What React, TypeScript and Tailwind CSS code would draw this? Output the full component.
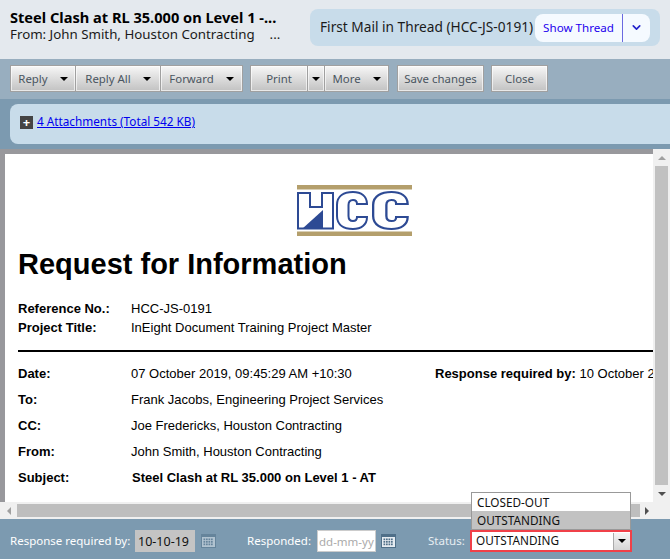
import { ChevronDown } from 'lucide-react';

const toolbarBtn = 'h-[27px] flex items-center justify-center text-[11.4px] text-[#4a5560] bg-gradient-to-b from-[#f7f7f7] to-[#c2c2c2] border border-[#a0a0a0] shadow-[inset_0_0_0_1px_#ffffffa0]';

function Caret() {
  return <span className="w-0 h-0 border-x-[4px] border-x-transparent border-t-[4px] border-t-black" />;
}

function CalendarIcon({ dim }: { dim?: boolean }) {
  return (
    <svg width="15" height="14" viewBox="0 0 15 14" className={dim ? 'opacity-50' : ''}>
      <rect x="0.5" y="0.5" width="14" height="13" fill="#e6ecf1" stroke="#4f6f88" />
      <rect x="1" y="1" width="13" height="2" fill="#4f6f88" />
      {[4.5, 7, 9.5].map((y) =>
        [2.5, 5, 7.5, 10].map((x) => <rect key={`${x}-${y}`} x={x} y={y} width="1.7" height="1.7" fill="#4f6f88" />)
      )}
    </svg>
  );
}

const letterC = 'M31 19 H21 C21 16 20 15 17 15 C14 15 12.5 17 12.5 20 V31 C12.5 34 14 36 17 36 C20 36 21 35 21 32 H31 C31 40 25 44 17 44 C8 44 1 40 1 31 V20 C1 11 8 7 17 7 C25 7 31 11 31 19 Z';

function Logo() {
  return (
    <svg width="115" height="51" viewBox="0 0 115 51">
      <rect x="0" y="0" width="115" height="4.5" fill="#b49f6c" />
      <rect x="0" y="46.5" width="115" height="4.5" fill="#b49f6c" />
      <path d="M1 8 H13 V22 H25 V8 H36 V43.5 H1 Z" fill="#fff" stroke="#2d4a94" strokeWidth="2" />
      <path d="M5 44 L26 25 V44 Z" fill="#2d4a94" />
      <path d={letterC} fill="#fff" stroke="#2d4a94" strokeWidth="2" transform="translate(39 0)" />
      <path d={letterC} fill="#fff" stroke="#2d4a94" strokeWidth="2" transform="translate(75 0) scale(1.15 1)" />
    </svg>
  );
}

const refRows = [
  ['Reference No.:', 'HCC-JS-0191'],
  ['Project Title:', 'InEight Document Training Project Master'],
];

const mailRows = [
  ['To:', 'Frank Jacobs, Engineering Project Services'],
  ['CC:', 'Joe Fredericks, Houston Contracting'],
  ['From:', 'John Smith, Houston Contracting'],
];

export default function App() {
  return (
    <div className="w-[670px] h-[559px] overflow-hidden flex flex-col bg-[#7c9ab0] font-['Noto_Sans',sans-serif] text-[13px] text-[#1a1a1a]">
      {/* Header */}
      <div className="h-[59px] shrink-0 bg-[#e4e9ee] flex items-start justify-between pl-[10px] pr-[10px]">
        <div className="pt-[9px] leading-[17px]">
          <div className="font-bold text-[14.6px] text-black whitespace-nowrap">Steel Clash at RL 35.000 on Level 1 -...</div>
          <div className="text-[13.3px] whitespace-nowrap">From: John Smith, Houston Contracting<span className="ml-[15px]">...</span></div>
        </div>
        <div className="mt-[9px] h-[37px] w-[350px] rounded-lg bg-[#c8dcea] flex items-center pl-[10px] text-[13.7px] whitespace-nowrap">
          <span>First Mail in Thread (HCC-JS-0191)</span>
          <div className="ml-auto mr-[10px] h-[28px] w-[115px] shrink-0 rounded-lg bg-[#f5faff] flex items-center text-[#2200ee] text-[11.6px]">
            <span className="flex-1 text-center">Show Thread</span>
            <span className="w-[28px] h-full border-l border-[#6a6ae0] flex items-center justify-center">
              <ChevronDown size={13} strokeWidth={3} className="text-[#2222cc]" />
            </span>
          </div>
        </div>
      </div>

      {/* Toolbar */}
      <div className="h-[40px] shrink-0 bg-[#98aebf] flex items-center pl-[10px] pb-[1px]">
        <div className="flex">
          <button className={`${toolbarBtn} w-[66px] gap-[12px]`}>Reply <Caret /></button>
          <button className={`${toolbarBtn} w-[85px] gap-[12px] border-l-0`}>Reply All <Caret /></button>
          <button className={`${toolbarBtn} w-[82px] gap-[12px] border-l-0`}>Forward <Caret /></button>
        </div>
        <div className="flex ml-[7px]">
          <button className={`${toolbarBtn} w-[58px]`}>Print</button>
          <button className={`${toolbarBtn} w-[17px] border-l-0`}><Caret /></button>
          <button className={`${toolbarBtn} w-[64px] gap-[12px] border-l-0`}>More <Caret /></button>
        </div>
        <button className={`${toolbarBtn} w-[87px] ml-[8px]`}>Save changes</button>
        <button className={`${toolbarBtn} w-[57px] ml-[7px]`}>Close</button>
      </div>

      {/* Attachments */}
      <div className="shrink-0 pt-[5px] pb-[5px] pl-[10px]">
        <div className="h-[40px] rounded-l-lg bg-[#c8dcea] flex items-center pl-[10px] pb-[4px] gap-[4px] text-[11.75px]">
          <span className="w-[13px] h-[13px] bg-[#444] text-white flex items-center justify-center text-[13px] font-bold leading-none">+</span>
          <a className="text-[#0000ee] underline">4 Attachments (Total 542 KB)</a>
        </div>
      </div>

      {/* Mail body */}
      <div className="flex-1 min-h-0 flex flex-col">
        <div className="flex-1 min-h-0 flex">
          <div className="flex-1 min-w-0 bg-[#98989c] pl-[5px] pt-[5px]">
            <div className="h-full overflow-hidden bg-white pl-[13px] pt-[31px] font-['Liberation_Sans',sans-serif] text-[13px] leading-[15px] text-black whitespace-nowrap">
              <div className="flex ml-[279px]"><Logo /></div>
              <h1 className="font-bold text-[29px] leading-[34px] mt-[11px]">Request for Information</h1>
              <div className="mt-[18px] leading-[19px]">
                {refRows.map(([k, v]) => (
                  <div key={k} className="flex">
                    <span className="w-[113px] shrink-0 font-bold">{k}</span><span>{v}</span>
                  </div>
                ))}
              </div>
              <div className="h-[2px] bg-black mt-[13px]" />
              <div className="flex mt-[14px] h-[26px]">
                <span className="w-[113px] shrink-0 font-bold">Date:</span>
                <span className="w-[304px] shrink-0">07 October 2019, 09:45:29 AM +10:30</span>
                <span><b>Response required by:</b> 10 October 2019</span>
              </div>
              {mailRows.map(([k, v]) => (
                <div key={k} className="flex h-[26px]">
                  <span className="w-[113px] shrink-0 font-bold">{k}</span><span>{v}</span>
                </div>
              ))}
              <div className="flex h-[26px] font-bold">
                <span className="w-[113px] shrink-0">Subject:</span><span className="ml-[1px]">Steel Clash at RL 35.000 on Level 1 - AT</span>
              </div>
            </div>
          </div>
          {/* Vertical scrollbar */}
          <div className="w-[17px] shrink-0 bg-[#f0f0f0] flex flex-col items-center">
            <div className="h-[17px] flex items-center justify-center"><span className="w-0 h-0 border-x-[4px] border-x-transparent border-b-[4px] border-b-[#a0a0a0]" /></div>
            <div className="flex-1 w-[13px] bg-[#c1c1c1]" />
            <div className="h-[17px] flex items-center justify-center"><span className="w-0 h-0 border-x-[4px] border-x-transparent border-t-[4px] border-t-[#505050]" /></div>
          </div>
        </div>
        {/* Horizontal scrollbar */}
        <div className="h-[17px] shrink-0 bg-[#f0f0f0] flex items-center">
          <div className="w-[17px] flex items-center justify-center"><span className="w-0 h-0 border-y-[4px] border-y-transparent border-r-[4px] border-r-[#a0a0a0]" /></div>
          <div className="flex-1 h-[13px] bg-[#bebebe]" />
          <div className="w-[13px] flex items-center justify-center"><span className="w-0 h-0 border-y-[4px] border-y-transparent border-l-[4px] border-l-[#505050]" /></div>
          <div className="w-[17px]" />
        </div>
      </div>

      {/* Footer */}
      <div className="h-[40px] shrink-0 bg-[#7c9ab0] flex items-center pl-[10px] pt-[3px] text-[11.5px] whitespace-nowrap">
        <span className="text-white w-[125px]">Response required by:</span>
        <span className="w-[60px] h-[22px] bg-[#c4c4c4] flex items-center pl-[3px] pt-[3px] text-[12.5px] text-[#111]">10-10-19</span>
        <span className="ml-[6px] flex"><CalendarIcon dim /></span>
        <span className="text-white ml-[31px] w-[64px]">Responded:</span>
        <span className="ml-[6px] w-[59px] h-[22px] bg-white border border-[#ccc] flex items-center pl-[1px] pt-[2px] text-[11.5px] text-[#aaa]">dd-mm-yy</span>
        <span className="ml-[5px] flex"><CalendarIcon /></span>
        <span className="text-[#e8eef2] ml-[32px] w-[42px]">Status:</span>
        <div className="relative w-[162px] h-[22px] border-2 border-[#f04048] bg-white flex items-center pl-[4px] pt-[1px] text-[11.75px] text-[#111]">
          <span className="flex-1">OUTSTANDING</span>
          <span className="w-[17px] h-full bg-gradient-to-b from-[#f5f5f5] to-[#d5d5d5] border-l border-[#aaa] flex items-center justify-center"><Caret /></span>
          {/* open dropdown */}
          <div className="absolute left-[-1px] bottom-[20px] w-[160px] h-[38px] bg-white border border-[#999] text-[#111]">
            <div className="h-[18px] pl-[5px] leading-[18px]">CLOSED-OUT</div>
            <div className="h-[18px] pl-[5px] leading-[18px] bg-[#c2c2c2]">OUTSTANDING</div>
          </div>
        </div>
      </div>
    </div>
  );
}
